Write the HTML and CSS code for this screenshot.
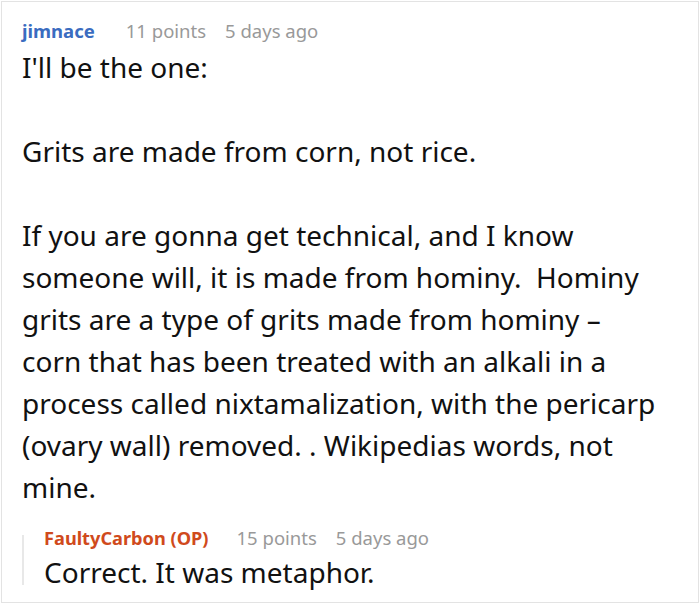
FILE: index.html
```html
<!DOCTYPE html>
<html>
<head>
<meta charset="utf-8">
<link rel="stylesheet" href="styles.css">
</head>
<body>
<div class="frame">
  <div class="comment">
    <div class="meta">
      <span class="user">jimnace</span>
      <span class="points">11 points</span>
      <span class="age">5 days ago</span>
    </div>
    <div class="body">I'll be the one:

Grits are made from corn, not rice.

If you are gonna get technical, and I know someone will, it is made from hominy.&nbsp; Hominy grits are a type of grits made from hominy – corn&nbsp;that has been treated with an alkali in a process called nixtamalization, with the pericarp (ovary wall) removed. . Wikipedias words, not mine.</div>
    <div class="reply">
      <div class="meta">
        <span class="user op">FaultyCarbon (OP)</span>
        <span class="points">15 points</span>
        <span class="age">5 days ago</span>
      </div>
      <div class="body reply-body">Correct. It was metaphor.</div>
    </div>
  </div>
</div>
</body>
</html>
```
FILE: styles.css
```css
html, body {
  margin: 0;
  padding: 0;
  background: #ffffff;
}
body {
  font-family: "Noto Sans", "Open Sans", sans-serif;
  color: #111111;
}
.frame {
  margin: 1px;
  width: 696px;
  height: 600px;
  border: 1px solid #e3e3e3;
  overflow: hidden;
}
.comment {
  padding: 16px 5px 0 20px;
}
.meta {
  font-size: 18.5px;
  line-height: 26px;
  display: flex;
  align-items: baseline;
  white-space: nowrap;
}
.user {
  color: #3a6cc0;
  font-weight: 700;
  margin-right: 31px;
}
.user.op {
  color: #d04a1c;
  font-size: 18.2px;
  margin-right: 28px;
}
.points {
  color: #999999;
  margin-right: 19px;
}
.age {
  color: #999999;
}
.body {
  font-size: 28px;
  line-height: 42px;
  white-space: pre-wrap;
  margin-top: 2px;
}
.reply {
  position: relative;
  margin-top: 17px;
  padding-left: 22px;
}
.reply::before {
  content: "";
  position: absolute;
  left: 0;
  top: 10px;
  bottom: 8px;
  width: 2px;
  background: #e8e8e8;
}
.reply-body {
  margin-top: 0;
}
```
